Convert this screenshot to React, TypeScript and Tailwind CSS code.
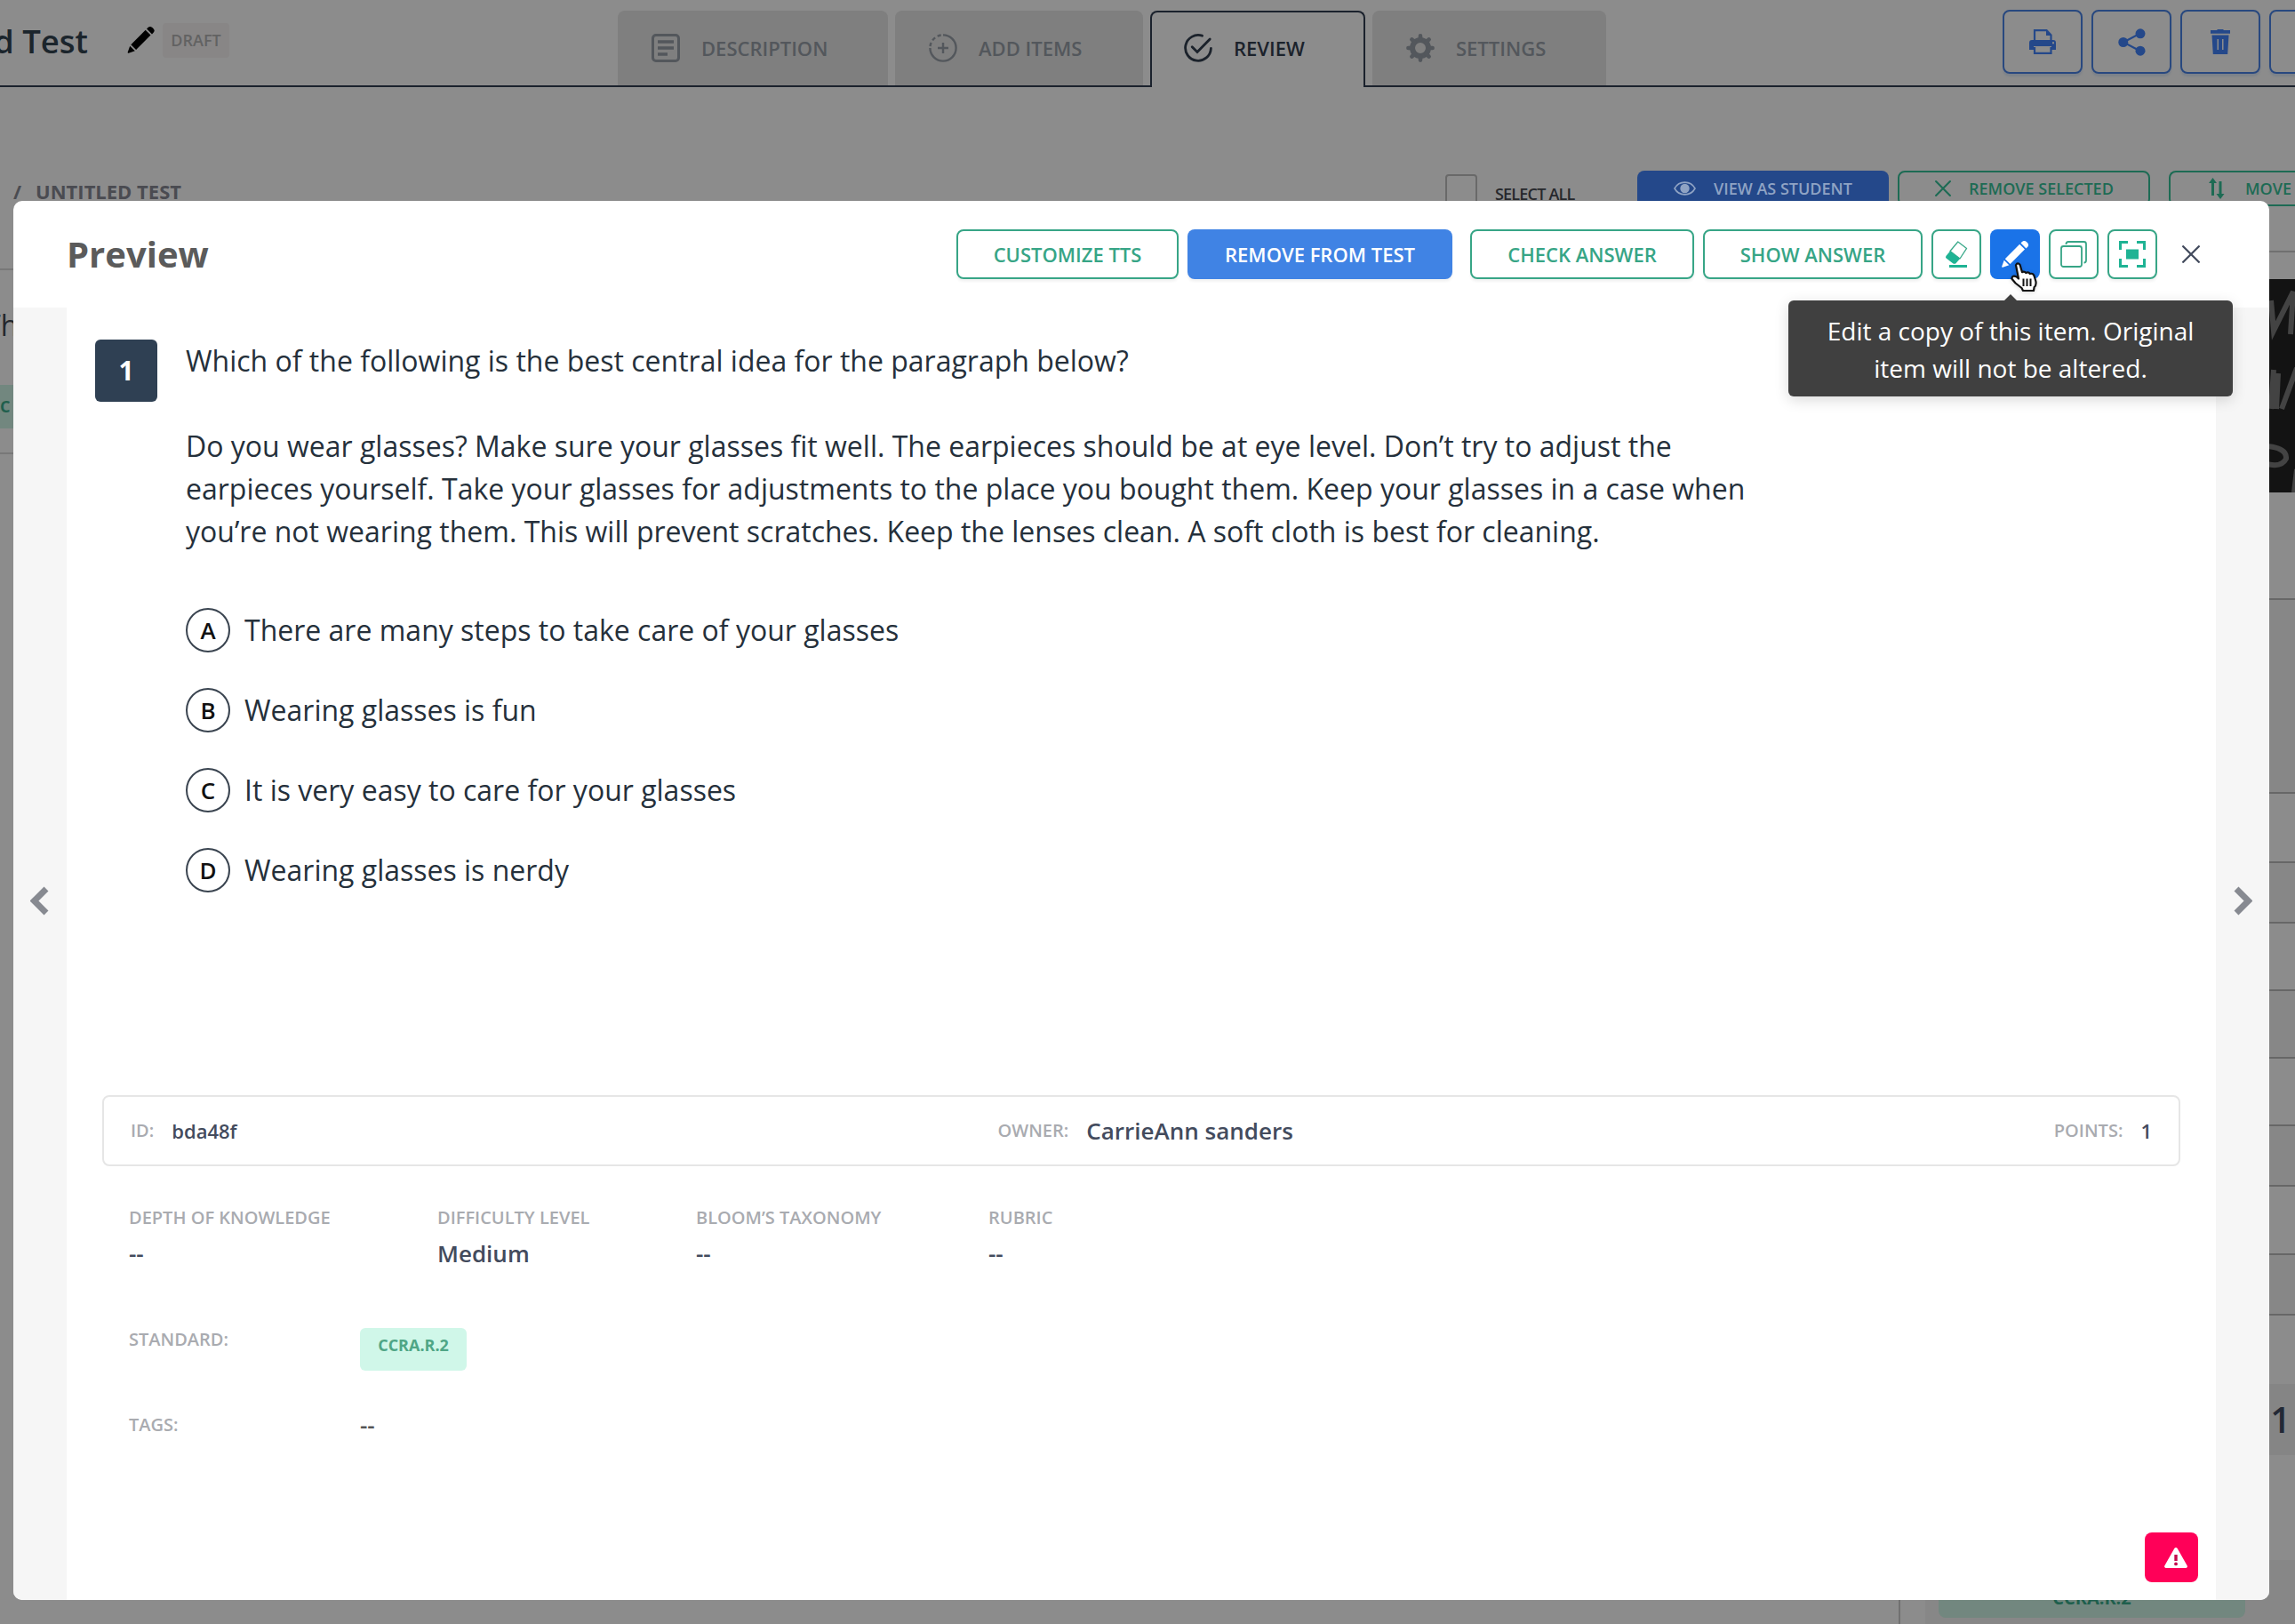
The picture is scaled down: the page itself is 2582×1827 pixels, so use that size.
import type { ReactNode } from "react";
import { clsx } from "clsx";

const DescriptionIcon = () => (
  <svg className="h-8 w-8" viewBox="0 0 32 32" fill="none" stroke="currentColor">
    <rect x="1.5" y="1.5" width="29" height="29" rx="3.5" strokeWidth="3" />
    <path d="M7 9h18M7 16h18M7 23h11" strokeWidth="3.4" />
  </svg>
);

const AddItemsIcon = () => (
  <svg className="h-8 w-8" viewBox="0 0 32 32" fill="none" stroke="currentColor" strokeWidth="2.4">
    <path d="M16 1.4A14.6 14.6 0 1 1 1.4 16" />
    <path d="M1.5 14A14.6 14.6 0 0 1 14 1.5" strokeDasharray="4.2 3" />
    <path d="M16 10v12M10 16h12" />
  </svg>
);

const ReviewIcon = () => (
  <svg
    className="h-8 w-8"
    viewBox="0 0 32 32"
    fill="none"
    stroke="currentColor"
    strokeWidth="2.8"
    strokeLinecap="round"
  >
    <path d="M20.5 2.2A14.4 14.4 0 1 0 30.4 16.5" />
    <path d="M9.2 14.8 15 20.6 29.2 6" />
  </svg>
);

const SettingsIcon = () => (
  <svg className="h-8 w-8" viewBox="0 0 32 32" fill="none" stroke="currentColor">
    <circle cx="16" cy="16" r="9" strokeWidth="6" />
    <path
      d="M16 2.4v4M16 25.6v4M2.4 16h4M25.6 16h4M6.4 6.4l3 3M22.6 22.6l3 3M25.6 6.4l-3 3M9.4 22.6l-3 3"
      strokeWidth="4.6"
      strokeLinecap="round"
    />
  </svg>
);

const PencilIcon = ({ className }: { className: string }) => (
  <svg className={className} viewBox="0 0 30 30" fill="currentColor">
    <path d="M20.2 3.8 26 9.6 9.6 26 3.8 20.2Z" />
    <path d="M21.6 2.4l1.3-1.3a3.6 3.6 0 0 1 5 0l1 1a3.6 3.6 0 0 1 0 5l-1.4 1.3Z" />
    <path d="M2.7 21.7 8.3 27.3 1.2 29.7a.8.8 0 0 1-1-1Z" />
  </svg>
);

const PrintIcon = () => (
  <svg className="h-7 w-[30px]" viewBox="0 0 30 28">
    <path
      d="M3 12H27a3 3 0 0 1 3 3V23H25V19H5V23H0V15A3 3 0 0 1 3 12ZM26 14.2v2h2v-2Z"
      fill="currentColor"
      fillRule="evenodd"
    />
    <path d="M19 1 25 7H19Z" fill="currentColor" />
    <path d="M6 14V1.2H19.500L24.500 6.500V14M6 20V26.800H24.500V20" fill="none" stroke="currentColor" strokeWidth="2.2" />
  </svg>
);

const ShareIcon = () => (
  <svg className="h-[31px] w-[31px]" viewBox="0 0 31 31" fill="currentColor">
    <path d="M6 15.5 25 5.5M6 15.5 25 25.5" stroke="currentColor" strokeWidth="2" />
    <circle cx="5.800" cy="15.5" r="5.500" />
    <circle cx="25" cy="5.800" r="5.500" />
    <circle cx="25" cy="25.200" r="5.500" />
  </svg>
);

const TrashIcon = () => (
  <svg className="h-7 w-[22px]" viewBox="0 0 22 28">
    <path d="M0 1H7L8 0H14L15 1H22V4.800H0Z" fill="currentColor" />
    <path
      d="M1.5 6.5H20.5L19.2 28H2.8ZM7.5 11V23H9V11ZM13 11V23H14.500V11Z"
      fill="currentColor"
      fillRule="evenodd"
    />
  </svg>
);

const EyeIcon = () => (
  <svg className="h-4 w-[25px]" viewBox="0 0 25 16">
    <path
      d="M1 8C6-1.2 19-1.2 24 8 19 17.2 6 17.2 1 8Z"
      fill="none"
      stroke="currentColor"
      strokeWidth="1.6"
    />
    <circle cx="12.5" cy="8" r="5.2" fill="currentColor" />
  </svg>
);

const CrossIcon = ({ className }: { className: string }) => (
  <svg
    className={className}
    viewBox="0 0 20 20"
    fill="none"
    stroke="currentColor"
    strokeWidth="2.3"
    strokeLinecap="round"
  >
    <path d="M1.2 1.2 18.8 18.8M18.8 1.2 1.2 18.8" />
  </svg>
);

const MoveIcon = () => (
  <svg className="h-6 w-5" viewBox="0 0 20 24" fill="currentColor">
    <path d="M5.5 0 10 6H7V20H4V6H1Z" />
    <path d="M14 24 9.5 18H12.500V4H15.500V18H18.500Z" />
  </svg>
);

const EraserIcon = () => (
  <svg className="h-[30px] w-[26px]" viewBox="0 0 26 30">
    <path
      d="M14.8 1 24.6 8.4 17 20 6 11.5Z"
      fill="none"
      stroke="#3aa98a"
      strokeWidth="1.3"
      strokeLinejoin="round"
    />
    <path d="M6 11.5 17 20 12.5 25.2Q11 26.4 9.4 25.4L1.6 19.6Q.4 18.4 1.4 16.9Z" fill="#1fb394" />
    <path d="M5 28.5H25" stroke="#1fb394" strokeWidth="3" />
  </svg>
);

const CopyIcon = () => (
  <svg className="h-[30px] w-[30px]" viewBox="0 0 30 30" fill="none" stroke="currentColor" strokeWidth="1.8">
    <rect x="1" y="6" width="23" height="23" rx="2.5" />
    <path d="M6.5 4V3.500Q6.5 1 9 1H26.500Q29 1 29 3.500V22Q29 24.500 26.500 24.500" />
  </svg>
);

const FocusIcon = () => (
  <svg className="h-[30px] w-[30px]" viewBox="0 0 30 30" fill="none" stroke="#1fb394" strokeWidth="3">
    <path d="M1.5 10V1.5H10M20 1.5H28.5V10M28.5 20V28.5H20M10 28.5H1.5V20" />
    <rect x="8" y="9.5" width="14" height="11" fill="#1fb394" stroke="none" />
  </svg>
);

const ChevronIcon = ({ className }: { className?: string }) => (
  <svg
    className={clsx("h-[33px] w-[21px] text-[#878a91]", className)}
    viewBox="0 0 21 33"
    fill="none"
    stroke="currentColor"
    strokeWidth="7"
  >
    <path d="M18 3 4.500 16.5 18 30" />
  </svg>
);

const WarningIcon = () => (
  <svg className="h-[23px] w-[26px]" viewBox="0 0 26 23">
    <path
      d="M11.3 1A2 2 0 0 1 14.7 1L25.6 20.2A1.8 1.8 0 0 1 24 23H2A1.8 1.8 0 0 1 .4 20.2Z"
      fill="#fff"
    />
    <path d="M13 8V15" stroke="#c40a4c" strokeWidth="3.4" />
    <circle cx="13" cy="18.4" r="1.9" fill="#c40a4c" />
  </svg>
);

const HandCursor = () => (
  <svg className="absolute top-[37px] left-[22px] z-10 h-9 w-9 drop-shadow-sm" viewBox="0 0 36 36">
    <path
      d="M7 3.200Q9-.2 11.600 3L14 11.200Q16.500 9.800 18.300 12 21 10.600 22.800 13 26.200 12 27.400 15L29.400 21.500Q30.200 26 27.600 28L27 32H15L13.500 29 6.500 23.500 2.300 18.500Q3 14.200 7.500 16.200L10 18.500Z"
      fill="#fff"
      stroke="#111"
      strokeWidth="2.2"
      strokeLinejoin="round"
    />
    <path d="M15.500 18.500V27M19.500 18.500V27M23.500 18.500V27" stroke="#111" strokeWidth="2" />
  </svg>
);

type TabProps = {
  label: string;
  icon: ReactNode;
  className: string;
  active?: boolean;
};
const Tab = ({ label, icon, className, active }: TabProps) => (
  <div
    className={clsx(
      "flex items-center gap-6 rounded-t-lg text-[22px] font-semibold",
      active
        ? "z-10 h-[86px] border-2 border-b-0 border-[#1b222d] bg-[#8c8c8c] pb-1 pl-9 text-[#1b222b]"
        : "h-[84px] bg-[#7f7f7f] pl-[38px] text-[#53575c]",
      className
    )}
  >
    {icon}
    <span>{label}</span>
  </div>
);

const ToolButton = ({ children }: { children?: ReactNode }) => (
  <button className="flex h-[72px] w-[90px] shrink-0 items-center justify-center rounded-lg border-2 border-[#28487f] text-[#24488a] shadow-[0_3px_2px_#7c828a]">
    {children}
  </button>
);

const TopBar = () => (
  <header className="flex h-[98px] border-b-2 border-[#1b222d]">
    <div className="flex w-[695px] shrink-0 items-start">
      <h1 className="-ml-[7px] w-[150px] pt-[21px] text-[36.5px] leading-[50px] font-semibold whitespace-nowrap text-[#1b252c]">
        d Test
      </h1>
      <PencilIcon className="mt-[30px] h-[30px] w-[31px] text-black" />
      <span className="mt-[26px] ml-[9px] flex h-[39px] w-[75px] items-center justify-center rounded bg-[#888686] text-[18px] font-semibold text-[#626262]">
        DRAFT
      </span>
    </div>
    <nav className="flex gap-2 pt-3">
      <Tab className="w-[304px]" label="DESCRIPTION" icon={<DescriptionIcon />} />
      <Tab className="w-[279px]" label="ADD ITEMS" icon={<AddItemsIcon />} />
      <Tab className="w-[242px]" label="REVIEW" icon={<ReviewIcon />} active />
      <Tab className="w-[263px]" label="SETTINGS" icon={<SettingsIcon />} />
    </nav>
    <div className="ml-auto flex w-[329px] gap-2.5 overflow-hidden pt-[11px]">
      <ToolButton>
        <PrintIcon />
      </ToolButton>
      <ToolButton>
        <ShareIcon />
      </ToolButton>
      <ToolButton>
        <TrashIcon />
      </ToolButton>
      <ToolButton />
    </div>
  </header>
);

const ActionBar = () => (
  <div className="flex h-[184px] items-start overflow-hidden pt-[94px]">
    <div className="flex h-[46px] items-center gap-4 pl-[15px] text-[22px] font-bold text-[#4a4b51]">
      <span>/</span>
      <span>UNTITLED TEST</span>
    </div>
    <div className="ml-auto flex h-10 shrink-0 text-[18px] font-semibold">
      <div className="mt-1 h-9 w-9 rounded border-2 border-[#696969]" />
      <span className="mt-[13px] ml-5 w-[160px] leading-[26px] tracking-[-0.8px] text-[#26282c]">
        SELECT ALL
      </span>
      <button className="mr-2.5 flex w-[283px] items-center gap-5 rounded-t-lg bg-[#24488a] pl-[41px] text-[#8fa3c4]">
        <EyeIcon />
        <span>VIEW AS STUDENT</span>
      </button>
      <button className="mr-[21px] flex w-[284px] items-center gap-5 rounded-lg border-2 border-[#1d6b54] pl-10 text-[#1d6b54]">
        <CrossIcon className="h-[18px] w-[18px]" />
        <span>REMOVE SELECTED</span>
      </button>
      <div className="flex w-[142px] items-center gap-[22px] overflow-hidden rounded-l-lg border-2 border-r-0 border-[#1d6b54] pl-[42px] text-[#1d6b54]">
        <MoveIcon />
        <span>MOVE</span>
      </div>
    </div>
  </div>
);

const summaryRows = [
  { height: "h-[218px]", shade: "bg-[#878787]" },
  { height: "h-[78px]", shade: "bg-[#8c8c8c]" },
  { height: "h-[68px]", shade: "bg-[#878787]" },
  { height: "h-[76px]", shade: "bg-[#8c8c8c]" },
  { height: "h-[76px]", shade: "bg-[#878787]" },
  { height: "h-[76px]", shade: "bg-[#8c8c8c]" },
  { height: "h-[68px]", shade: "bg-[#878787]" },
  { height: "h-[77px]", shade: "bg-[#8c8c8c]" },
  { height: "h-[68px]", shade: "bg-[#878787]" },
];

const PageBody = () => (
  <div className="flex h-[1545px] justify-between overflow-hidden">
    <div className="mt-[20px] w-[60px] border-t-2 border-[#787878]">
      <p className="-ml-[17px] pt-[38px] text-[32px] leading-[48px] text-[#23272c]">Th</p>
      <div className="mt-[43px] flex h-[49px] items-center bg-[#72877f] text-[18px] font-bold text-[#1f5f4d]">
        C
      </div>
      <hr className="mt-[27px] border-t-2 border-[#787878]" />
    </div>
    <aside className="w-[446px] border-l-2 border-[#707070]">
      <div className="h-8 border-t-2 border-[#707070]" />
      <div className="relative h-[240px] bg-[#131313]">
        <svg
          className="absolute top-0 right-0 h-[240px] w-[29px]"
          viewBox="0 0 29 240"
          fill="none"
          stroke="#434343"
          strokeWidth="6"
        >
          <path d="M2 24 5 58 27 14 24 62" />
          <path d="M5 102 2 146M10 106 8 146M14 146 31 100" />
          <path d="M-2 188Q20 190 19 202 14 212-2 208M31 214 28 240" />
        </svg>
      </div>
      <div className="h-[119px]" />
      {summaryRows.map(({ height, shade }, index) => (
        <div key={index} className={clsx("border-t-2 border-[#676767]", height, shade)} />
      ))}
      <div className="h-[79px] border-t-2 border-[#676767]" />
      <div className="flex h-20 items-center justify-end bg-[#858585] pr-[5px] text-[40px] font-semibold text-[#232936]">
        1
      </div>
      <div className="mt-[118px] ml-[28px] bg-[#878787] pt-4">
        <div className="mx-[15px] flex h-[49px] w-[345px] items-center justify-center rounded-lg bg-[#72877f] pt-1 text-[20px] font-bold text-[#1f5f4d]">
          CCRA.R.2
        </div>
        <div className="h-10" />
      </div>
    </aside>
  </div>
);

type HeaderButtonProps = {
  children: ReactNode;
  className: string;
  primary?: boolean;
};
const HeaderButton = ({ children, className, primary }: HeaderButtonProps) => (
  <button
    className={clsx(
      "flex h-14 items-center justify-center rounded-lg text-[22px] leading-none font-semibold shadow-[0_3px_3px_#0000000d]",
      primary ? "bg-[#4083e4] text-white" : "border-2 border-[#37a586] text-[#37a586]",
      className
    )}
  >
    {children}
  </button>
);

const Tooltip = () => (
  <div className="absolute top-[80px] -left-[227px] z-20 w-[500px] rounded-md bg-[#404040] pt-[13px] pb-[11px] text-center text-[28px] leading-[42px] text-white shadow-[0_4px_16px_#00000026]">
    <span className="absolute -top-[7px] left-[242px] h-0 w-0 border-x-[8px] border-b-[8px] border-x-transparent border-b-[#404040]" />
    Edit a copy of this item. Original
    <br />
    item will not be altered.
  </div>
);

const ModalHeader = () => (
  <div className="flex h-[120px] items-center pr-[78px] pl-[60px]">
    <h2 className="mr-auto text-[40px] leading-none font-bold text-[#5b5b5b]">Preview</h2>
    <HeaderButton className="w-[250px]">CUSTOMIZE TTS</HeaderButton>
    <HeaderButton className="ml-2.5 w-[298px]" primary>
      REMOVE FROM TEST
    </HeaderButton>
    <HeaderButton className="ml-5 w-[252px]">CHECK ANSWER</HeaderButton>
    <HeaderButton className="ml-2.5 w-[247px]">SHOW ANSWER</HeaderButton>
    <HeaderButton className="ml-2.5 w-14">
      <EraserIcon />
    </HeaderButton>
    <div className="relative ml-2.5">
      <button className="flex h-14 w-14 items-center justify-center rounded-lg bg-[#1a73e8]">
        <PencilIcon className="h-[30px] w-[30px] text-white" />
      </button>
      <HandCursor />
      <Tooltip />
    </div>
    <HeaderButton className="ml-2.5 w-14">
      <CopyIcon />
    </HeaderButton>
    <HeaderButton className="ml-2.5 w-14">
      <FocusIcon />
    </HeaderButton>
    <button className="ml-7 text-[#434b5d]">
      <CrossIcon className="h-5 w-5" />
    </button>
  </div>
);

const options = [
  { letter: "A", text: "There are many steps to take care of your glasses" },
  { letter: "B", text: "Wearing glasses is fun" },
  { letter: "C", text: "It is very easy to care for your glasses" },
  { letter: "D", text: "Wearing glasses is nerdy" },
];

const Question = () => (
  <div className="flex h-[886px] gap-8 pt-9 pl-8 text-[32px] leading-[48px] text-[#25303b]">
    <div className="flex h-[70px] w-[70px] shrink-0 items-center justify-center rounded-md bg-[#2f4053] text-[30px] font-bold text-white">
      1
    </div>
    <div>
      <p>Which of the following is the best central idea for the paragraph below?</p>
      <p className="mt-12 whitespace-nowrap">
        Do you wear glasses? Make sure your glasses fit well. The earpieces should be at eye level. Don’t try to adjust the
        <br />
        earpieces yourself. Take your glasses for adjustments to the place you bought them. Keep your glasses in a case when
        <br />
        you’re not wearing them. This will prevent scratches. Keep the lenses clean. A soft cloth is best for cleaning.
      </p>
      <ul className="mt-[62px] space-y-10">
        {options.map(({ letter, text }) => (
          <li key={letter} className="flex h-[50px] items-center gap-4">
            <span className="flex h-[50px] w-[50px] items-center justify-center rounded-full border-2 border-[#3a4450] text-[26px] font-semibold text-[#111]">
              {letter}
            </span>
            <span>{text}</span>
          </li>
        ))}
      </ul>
    </div>
  </div>
);

const Label = ({ children, className }: { children: ReactNode; className?: string }) => (
  <span className={clsx("text-[20px] text-[#a9abb0]", className)}>{children}</span>
);

const details = [
  { label: "DEPTH OF KNOWLEDGE", value: "--", width: "w-[347px]" },
  { label: "DIFFICULTY LEVEL", value: "Medium", width: "w-[291px]" },
  { label: "BLOOM’S TAXONOMY", value: "--", width: "w-[329px]" },
  { label: "RUBRIC", value: "--", width: "w-[200px]" },
];

const Metadata = () => (
  <div className="px-10 font-semibold text-[#434b5d]">
    <div className="flex h-20 items-center justify-between rounded-lg border-2 border-[#e6e6e6] px-[30px]">
      <div className="flex items-center gap-5">
        <Label>ID:</Label>
        <span className="text-[22px]">bda48f</span>
      </div>
      <div className="flex items-center gap-5">
        <Label>OWNER:</Label>
        <span className="text-[26px]">CarrieAnn sanders</span>
      </div>
      <div className="flex items-center gap-5">
        <Label>POINTS:</Label>
        <span className="text-[22px]">1</span>
      </div>
    </div>
    <div className="flex pt-[42px] pl-[30px]">
      {details.map(({ label, value, width }) => (
        <div key={label} className={clsx("flex flex-col", width)}>
          <Label className="leading-8">{label}</Label>
          <span className="mt-1 text-[26px] leading-[40px]">{value}</span>
        </div>
      ))}
    </div>
    <div className="flex pt-14 pl-[30px]">
      <Label className="w-[260px] pt-[5px] leading-8">STANDARD:</Label>
      <span className="mt-[8px] h-12 w-[120px] rounded-md bg-[#d0f7e9] pt-[7px] text-center text-[18px] leading-6 font-bold text-[#4fa686]">
        CCRA.R.2
      </span>
    </div>
    <div className="flex items-center pt-[40px] pl-[30px]">
      <Label className="w-[260px]">TAGS:</Label>
      <span className="pt-0.5 text-[26px] leading-[39px] text-[#555]">--</span>
    </div>
  </div>
);

const PreviewModal = () => (
  <section className="absolute top-[226px] left-[15px] flex h-[1574px] w-[2538px] flex-col rounded-[10px] bg-white">
    <ModalHeader />
    <div className="flex flex-1">
      <div className="flex w-[60px] items-center justify-center rounded-bl-[10px] bg-[#f6f6f6] pr-0.5 pb-[120px]">
        <ChevronIcon />
      </div>
      <div className="flex flex-1 flex-col">
        <Question />
        <Metadata />
        <button className="mt-auto mr-5 mb-5 ml-auto flex h-14 w-[60px] items-center justify-end rounded-lg bg-[#ff0058] pr-3">
          <WarningIcon />
        </button>
      </div>
      <div className="flex w-[60px] items-center justify-center rounded-br-[10px] bg-[#f6f6f6] pb-[120px]">
        <ChevronIcon className="rotate-180" />
      </div>
    </div>
  </section>
);

const App = () => {
  return (
    <main className="relative h-[1827px] w-[2582px] overflow-hidden bg-[#8c8c8c] font-['Open_Sans','Noto_Sans',sans-serif]">
      <TopBar />
      <ActionBar />
      <PageBody />
      <PreviewModal />
    </main>
  );
};

export default App;
